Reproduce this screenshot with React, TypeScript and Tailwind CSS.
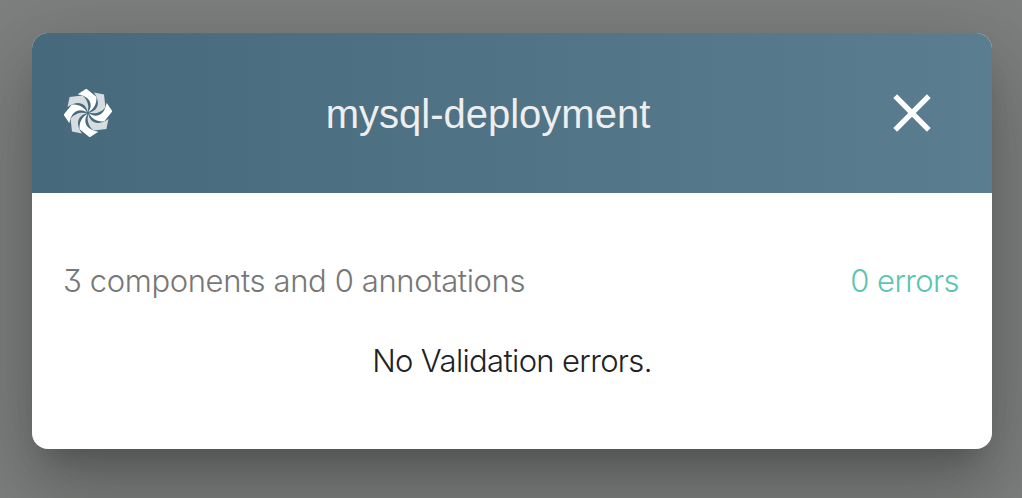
const blades = [0, 45, 90, 135, 180, 225, 270, 315];

function Logo() {
  return (
    <svg viewBox="-72 -72 144 144" className="h-12 w-12" aria-hidden="true">
      {blades.map((angle, i) => (
        <path
          key={angle}
          d="M1 -3 C15 -22 10 -49 -31 -56 L-5 -73 L25 -49 C28 -27 15 -9 1 -3 Z"
          transform={`rotate(${angle})`}
          fill={i % 2 === 0 ? "#ffffff" : "#d5dde1"}
        />
      ))}
    </svg>
  );
}

export default function App() {
  return (
    <div className="h-[498px] w-[1022px] overflow-hidden bg-[#7d807e] pl-8 pt-[33px]">
      <div className="h-[416px] w-[960px] overflow-hidden rounded-2xl bg-white shadow-[0_22px_30px_-14px_rgba(0,0,0,0.2),0_48px_76px_6px_rgba(0,0,0,0.14),0_18px_92px_16px_rgba(0,0,0,0.12)]">
        <header className="flex h-40 items-center justify-between bg-linear-to-r from-[#47697c] to-[#5a7d90] px-8">
          <Logo />
          <h1 className="ml-[-24px] pt-px font-['Liberation_Sans',sans-serif] text-[40px] leading-[60px] text-[#eeeeee]">
            mysql-deployment
          </h1>
          <button aria-label="Close" className="mr-6 flex h-12 w-12 items-center justify-center">
            <svg viewBox="0 0 24 24" className="h-16 w-16 shrink-0" fill="none" stroke="white" strokeWidth="2">
              <path d="M5.7 5.7 18.3 18.3M18.3 5.7 5.7 18.3" />
            </svg>
          </button>
        </header>
        <main className="px-8 pt-16 font-['Inter',sans-serif] text-[31px] font-light leading-[48px] [font-feature-settings:'cv09']">
          <div className="flex justify-between whitespace-nowrap text-[#777777]">
            <p className="-ml-px tracking-[-0.38px]">3 components and 0 annotations</p>
            <p className="mr-px tracking-[-0.6px] text-[#5dc4b1]">0 errors</p>
          </div>
          <p className="mt-8 text-center tracking-[-0.65px] text-[#212121]">No Validation errors.</p>
        </main>
      </div>
    </div>
  );
}
